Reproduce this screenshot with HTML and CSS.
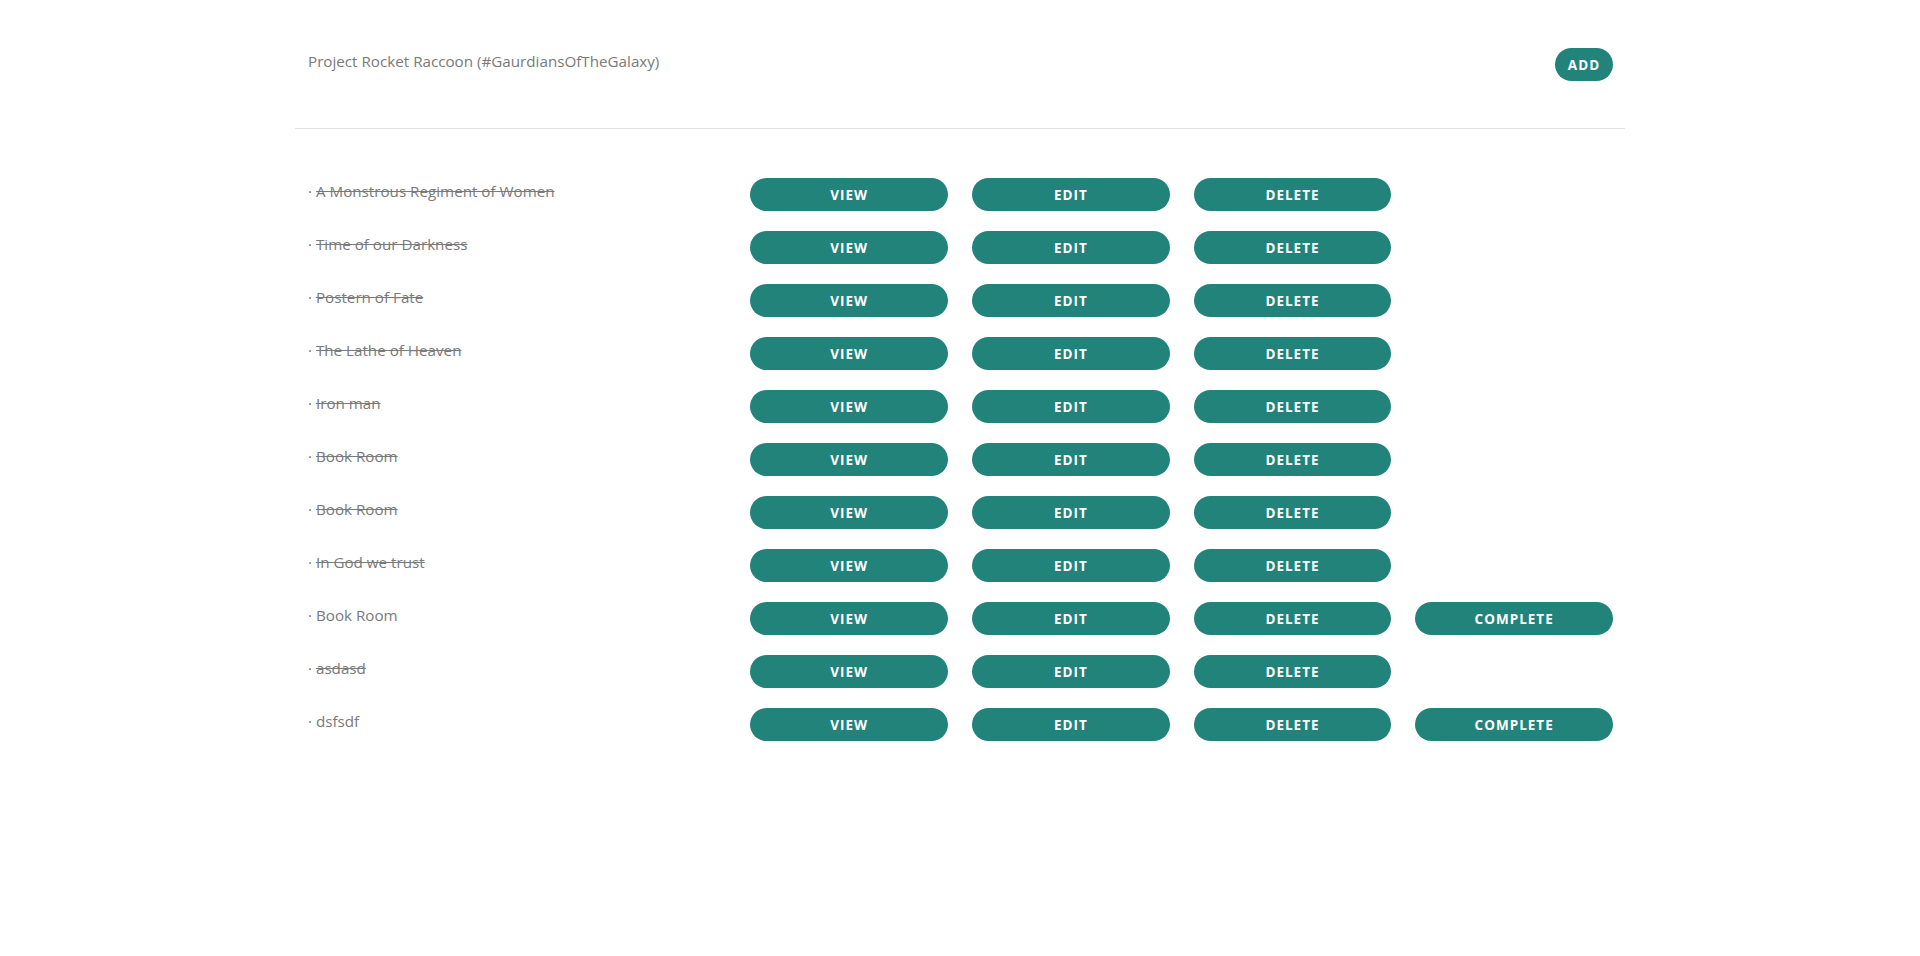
FILE: index.html
```html
<!DOCTYPE html>
<html lang="en">
<head>
<meta charset="utf-8">
<title>Project Rocket Raccoon</title>
<link rel="stylesheet" href="styles.css">
</head>
<body>
<div class="container">
  <header class="header">
    <div class="project-title">Project Rocket Raccoon (#GaurdiansOfTheGalaxy)</div>
    <button class="btn btn-add">ADD</button>
  </header>
  <main class="list">
    <div class="row">
      <div class="title">· <s>A Monstrous Regiment of Women</s></div>
      <div class="cell"><button class="btn">VIEW</button></div>
      <div class="cell"><button class="btn">EDIT</button></div>
      <div class="cell"><button class="btn">DELETE</button></div>
      <div class="cell"></div>
    </div>
    <div class="row">
      <div class="title">· <s>Time of our Darkness</s></div>
      <div class="cell"><button class="btn">VIEW</button></div>
      <div class="cell"><button class="btn">EDIT</button></div>
      <div class="cell"><button class="btn">DELETE</button></div>
      <div class="cell"></div>
    </div>
    <div class="row">
      <div class="title">· <s>Postern of Fate</s></div>
      <div class="cell"><button class="btn">VIEW</button></div>
      <div class="cell"><button class="btn">EDIT</button></div>
      <div class="cell"><button class="btn">DELETE</button></div>
      <div class="cell"></div>
    </div>
    <div class="row">
      <div class="title">· <s>The Lathe of Heaven</s></div>
      <div class="cell"><button class="btn">VIEW</button></div>
      <div class="cell"><button class="btn">EDIT</button></div>
      <div class="cell"><button class="btn">DELETE</button></div>
      <div class="cell"></div>
    </div>
    <div class="row">
      <div class="title">· <s>Iron man</s></div>
      <div class="cell"><button class="btn">VIEW</button></div>
      <div class="cell"><button class="btn">EDIT</button></div>
      <div class="cell"><button class="btn">DELETE</button></div>
      <div class="cell"></div>
    </div>
    <div class="row">
      <div class="title">· <s>Book Room</s></div>
      <div class="cell"><button class="btn">VIEW</button></div>
      <div class="cell"><button class="btn">EDIT</button></div>
      <div class="cell"><button class="btn">DELETE</button></div>
      <div class="cell"></div>
    </div>
    <div class="row">
      <div class="title">· <s>Book Room</s></div>
      <div class="cell"><button class="btn">VIEW</button></div>
      <div class="cell"><button class="btn">EDIT</button></div>
      <div class="cell"><button class="btn">DELETE</button></div>
      <div class="cell"></div>
    </div>
    <div class="row">
      <div class="title">· <s>In God we trust</s></div>
      <div class="cell"><button class="btn">VIEW</button></div>
      <div class="cell"><button class="btn">EDIT</button></div>
      <div class="cell"><button class="btn">DELETE</button></div>
      <div class="cell"></div>
    </div>
    <div class="row">
      <div class="title">· Book Room</div>
      <div class="cell"><button class="btn">VIEW</button></div>
      <div class="cell"><button class="btn">EDIT</button></div>
      <div class="cell"><button class="btn">DELETE</button></div>
      <div class="cell"><button class="btn">COMPLETE</button></div>
    </div>
    <div class="row">
      <div class="title">· <s>asdasd</s></div>
      <div class="cell"><button class="btn">VIEW</button></div>
      <div class="cell"><button class="btn">EDIT</button></div>
      <div class="cell"><button class="btn">DELETE</button></div>
      <div class="cell"></div>
    </div>
    <div class="row">
      <div class="title">· dsfsdf</div>
      <div class="cell"><button class="btn">VIEW</button></div>
      <div class="cell"><button class="btn">EDIT</button></div>
      <div class="cell"><button class="btn">DELETE</button></div>
      <div class="cell"><button class="btn">COMPLETE</button></div>
    </div>
  </main>
</div>
</body>
</html>
```
FILE: styles.css
```css
* { box-sizing: border-box; }

body {
  margin: 0;
  background: #ffffff;
  font-family: "Open Sans", "Noto Sans", sans-serif;
  color: #777777;
}

.container {
  width: 1330px;
  margin: 0 auto;
}

.header {
  display: flex;
  justify-content: space-between;
  align-items: flex-start;
  height: 129px;
  padding: 48px 12px 0 13px;
  border-bottom: 1px solid #e3e3e3;
}

.project-title {
  font-size: 15.2px;
  line-height: 27px;
  color: #7a7a7a;
}

.btn {
  display: block;
  width: 100%;
  height: 33px;
  border: none;
  border-radius: 17px;
  background: #22837b;
  color: #ffffff;
  font-family: "Open Sans", "Noto Sans", sans-serif;
  font-weight: 700;
  font-size: 13.5px;
  letter-spacing: 1px;
  padding: 0;
  cursor: pointer;
}

.btn-add {
  width: 58px;
  height: 33px;
  letter-spacing: 1px;
  font-size: 13.5px;
}

.list {
  padding-top: 49px;
}

.row {
  display: grid;
  grid-template-columns: 4fr 2fr 2fr 2fr 2fr;
  align-items: start;
  height: 53px;
}

.title {
  padding: 0 12px 0 13px;
  font-size: 15.2px;
  line-height: 26px;
  color: #7a7a7a;
}

.title s {
  text-decoration-thickness: 1px;
}

.cell {
  padding: 0 12px;
}
```
